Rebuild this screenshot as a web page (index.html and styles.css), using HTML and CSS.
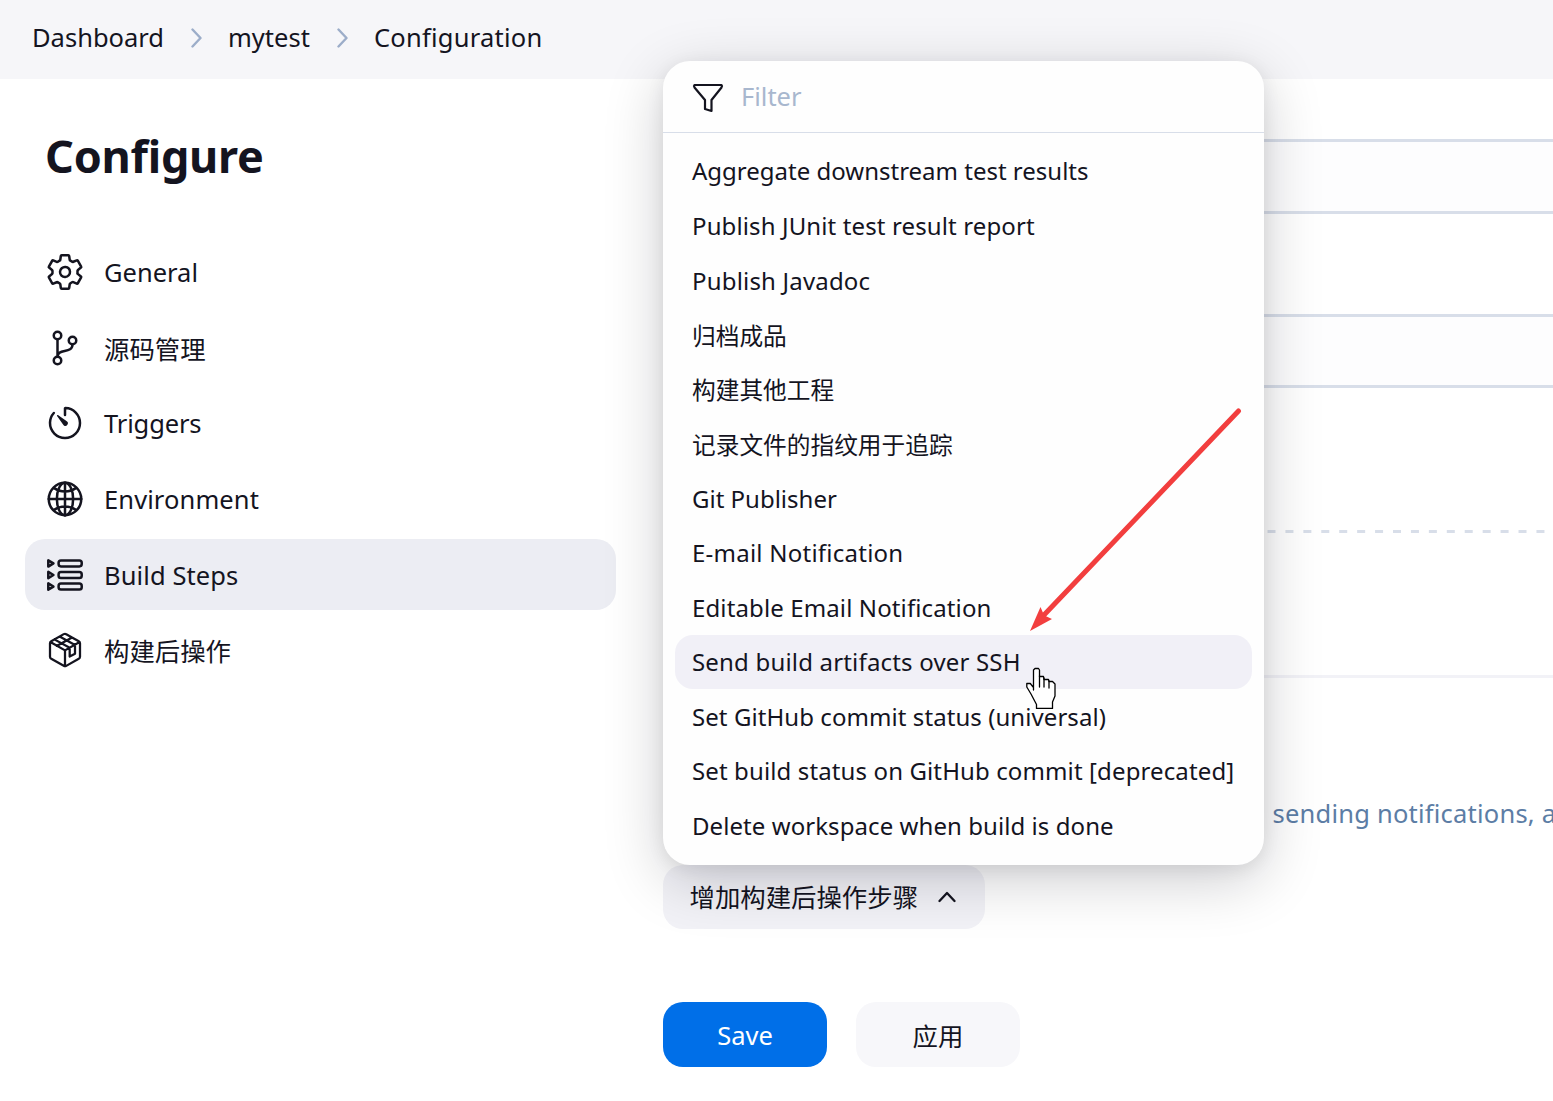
FILE: index.html
```html
<!DOCTYPE html>
<html lang="en">
<head>
<meta charset="utf-8">
<title>mytest Config</title>
<link rel="stylesheet" href="styles.css">
</head>
<body>
<header class="breadcrumbs">
  <span class="crumb">Dashboard</span>
  <svg class="crumb-sep" viewBox="0 0 12 20"><path d="M2.500 1.500l8 8.500l-8 8.500"/></svg>
  <span class="crumb">mytest</span>
  <svg class="crumb-sep" viewBox="0 0 12 20"><path d="M2.500 1.500l8 8.500l-8 8.500"/></svg>
  <span class="crumb crumb-page">Configuration</span>
</header>
<div class="page">
  <aside class="side-panel">
    <h1 class="title">Configure</h1>
    <nav class="tasks">
      <a class="task">
        <svg class="icon" viewBox="0 0 512 512"><path d="M262.290 192.310a64 64 0 1057.400 57.400 64.130 64.130 0 00-57.400-57.400zM416.390 256a154.340 154.340 0 01-1.530 20.790l45.210 35.460a10.810 10.810 0 012.450 13.750l-42.770 74a10.810 10.810 0 01-13.140 4.590l-44.900-18.080a16.110 16.110 0 00-15.170 1.750A164.480 164.480 0 01325 400.800a15.940 15.940 0 00-8.820 12.140l-6.730 47.890a11.080 11.080 0 01-10.680 9.170h-85.540a11.110 11.110 0 01-10.690-8.870l-6.720-47.820a16.070 16.070 0 00-9-12.220 155.300 155.300 0 01-21.460-12.570 16 16 0 00-15.110-1.710l-44.890 18.070a10.810 10.810 0 01-13.140-4.580l-42.770-74a10.800 10.800 0 012.450-13.750l38.210-30a16.050 16.050 0 006-14.080c-.36-4.170-.58-8.330-.58-12.500s.21-8.270.58-12.350a16 16 0 00-6.070-13.940l-38.190-30A10.810 10.810 0 0149.480 186l42.770-74a10.810 10.810 0 0113.140-4.590l44.900 18.080a16.110 16.110 0 0015.170-1.750A164.480 164.480 0 01187 111.200a15.940 15.940 0 008.820-12.140l6.730-47.890A11.080 11.080 0 01213.230 42h85.540a11.110 11.110 0 0110.690 8.870l6.720 47.820a16.070 16.070 0 009 12.220 155.300 155.300 0 0121.460 12.570 16 16 0 0015.110 1.710l44.890-18.070a10.810 10.810 0 0113.140 4.580l42.770 74a10.800 10.800 0 01-2.450 13.750l-38.210 30a16.050 16.050 0 00-6.050 14.080c.33 4.140.55 8.300.55 12.470z"/></svg>
        <span class="task-label">General</span>
      </a>
      <a class="task">
        <svg class="icon" viewBox="0 0 512 512"><circle cx="160" cy="96" r="48"/><circle cx="160" cy="416" r="48"/><circle cx="352" cy="160" r="48"/><path d="M160 368V144M352 208c0 128-192 48-192 160"/></svg>
        <span class="task-label cjk">源码管理</span>
      </a>
      <a class="task">
        <svg class="icon" viewBox="0 0 512 512"><path d="M112.910 128A191.850 191.850 0 0064 254c-1.180 106.350 85.650 193.800 192 194 106.200.2 192-85.830 192-192 0-104.540-83.550-189.610-187.500-192a4.360 4.360 0 00-4.500 4.370V152"/><path class="solid" d="M233.380 278.630l-79-113a8.130 8.130 0 0111.320-11.320l113 79a32.500 32.500 0 01-37.250 53.260 33.210 33.210 0 01-8.070-7.940z"/></svg>
        <span class="task-label t-triggers">Triggers</span>
      </a>
      <a class="task">
        <svg class="icon" viewBox="0 0 512 512"><circle cx="256" cy="256" r="208"/><ellipse cx="256" cy="256" rx="104" ry="208"/><path d="M256 48v416M48 256h416M117 117c38 27 86 43 139 43s101-16 139-43M117 395c38-27 86-43 139-43s101 16 139 43"/></svg>
        <span class="task-label t-wide">Environment</span>
      </a>
      <a class="task task-active">
        <svg class="icon" viewBox="0 0 512 512"><rect x="174" y="70" width="296" height="76" rx="30"/><rect x="174" y="218" width="296" height="76" rx="30"/><rect x="174" y="366" width="296" height="76" rx="30"/><path d="M42 68v80l66-40zM42 216v80l66-40zM42 364v80l66-40z"/></svg>
        <span class="task-label t-wide">Build Steps</span>
      </a>
      <a class="task">
        <svg class="icon box" viewBox="0 0 512 512"><path d="M448 341V171a32 32 0 00-16-28L272 53a32 32 0 00-32 0L80 143a32 32 0 00-16 28v170a32 32 0 0016 28l160 90a32 32 0 0032 0l160-90a32 32 0 0016-28zM69 154l187 107 187-107M256 463V261M187 84l197 107v112l-68 36V226L119 120M150 204L346 96"/></svg>
        <span class="task-label cjk">构建后操作</span>
      </a>
    </nav>
  </aside>
  <main class="content">
    <div class="field"></div>
    <div class="field field-second"></div>
    <svg class="dashes" viewBox="0 0 910 3"><path d="M604.500 1.500H890"/></svg>
    <div class="divider"></div>
    <p class="description">sending notifications, a</p>
    <div class="add-step"><span class="cjk">增加构建后操作步骤</span><svg class="chevron" viewBox="0 0 18 12"><path d="M1.500 10L9 2l7.500 8"/></svg></div>
    <div class="actions">
      <div class="button button-primary">Save</div>
      <div class="button cjk">应用</div>
    </div>
  </main>
</div>
<div class="menu">
  <div class="menu-filter">
    <svg class="funnel" viewBox="0 0 32 30"><path d="M2.500 2h27q1 1 0 2.500L19.500 17v11l-6.500-2V17L2.500 4.500Q1.500 3 2.500 2z"/></svg>
    <span class="filter-text">Filter</span>
  </div>
  <div class="menu-list">
    <div class="item">Aggregate downstream test results</div>
    <div class="item ls-2">Publish JUnit test result report</div>
    <div class="item ls-3 item-low">Publish Javadoc</div>
    <div class="item cjk-item">归档成品</div>
    <div class="item cjk-item">构建其他工程</div>
    <div class="item cjk-item">记录文件的指纹用于追踪</div>
    <div class="item">Git Publisher</div>
    <div class="item ls-4">E-mail Notification</div>
    <div class="item ls-2">Editable Email Notification</div>
    <div class="item ls-3 item-hover">Send build artifacts over SSH</div>
    <div class="item ls-1">Set GitHub commit status (universal)</div>
    <div class="item ls-2">Set build status on GitHub commit [deprecated]</div>
    <div class="item ls-1">Delete workspace when build is done</div>
  </div>
</div>
<svg class="arrow" viewBox="0 0 220 230"><path class="shaft" d="M208.500 7L14 211"/><path class="head" d="M0 227l10.500-24 3 7 2 2 6.500 3z"/></svg>
<svg class="pointer" viewBox="0 0 30 42"><path d="M7.500 23V3L9 1.500h3.500l1 1.500v6.500h4l.5 3h4.500l.5 2h3.500l2.500 2.500v12l-2.500 6v6.500H10.500v-4L5 27 .8 20v-3.500h3.500l3.200 4"/><path d="M13.500 9v11M18 11v9M23 14v7" /></svg>
</body>
</html>
```
FILE: styles.css
```css
* { box-sizing: border-box; }
body {
  margin: 0;
  width: 1553px;
  height: 1101px;
  overflow: hidden;
  position: relative;
  background: #fff;
  color: #14141f;
  font-family: "Noto Sans", "Noto Sans CJK SC", sans-serif;
  font-size: 25.500px;
}
svg { display: block; fill: none; stroke: currentColor; stroke-linecap: round; stroke-linejoin: round; flex: none; }
.breadcrumbs {
  height: 79px;
  padding: 0 0 3px 32px;
  display: flex;
  align-items: center;
  background: #f6f6f9;
  white-space: nowrap;
}
.crumb { padding-bottom: 2px; }
.crumb-page { letter-spacing: .24px; }
.crumb-sep { width: 12px; height: 20px; margin: 0 26px; stroke: #9cadc9; stroke-width: 2.400; }
.page { display: flex; height: 1022px; }
.side-panel { width: 616px; padding: 44px 0 0 25px; flex: none; }
.title { margin: 0 0 47px 20px; font-size: 45px; line-height: 66px; font-weight: 700; letter-spacing: -.25px; }
.tasks { display: flex; flex-direction: column; gap: 4px; }
.task { display: flex; align-items: center; height: 71.700px; padding-left: 20px; border-radius: 20px; }
.task-active { background: #ecedf3; }
.task-label { margin-left: 19px; }
.t-triggers { letter-spacing: -.14px; }
.t-wide { letter-spacing: .1px; }
.icon { width: 40px; height: 40px; stroke-width: 32; }
.icon .solid { fill: currentColor; stroke: none; }
.box { stroke-width: 29; }
.cjk { font-size: 25.400px; }
.content { flex: 1; margin-left: 47px; padding-top: 60px; min-width: 0; }
.field { height: 75px; border: 3px solid #d8dee9; border-right: 0; background: #fdfdfe; }
.field-second { margin-top: 100px; height: 74px; }
.dashes { width: 910px; height: 3px; margin-top: 142px; stroke: #d8dee9; stroke-width: 3; stroke-linecap: butt; stroke-dasharray: 8 9.930; }
.divider { height: 3px; margin-top: 142px; background: #f2f2f7; }
.description { margin: 116px 0 33px; padding-left: 609.500px; line-height: 38px; color: #5c7da5; white-space: nowrap; letter-spacing: .22px; }
.add-step { display: flex; align-items: center; width: 322px; height: 64px; padding-left: 26.500px; border-radius: 20px; background: #f2f2f7; }
.add-step .cjk { padding-bottom: 2px; }
.chevron { width: 18px; height: 12px; margin-left: 19.500px; stroke-width: 2.300; }
.actions { display: flex; gap: 29px; margin-top: 73px; }
.button { width: 164px; height: 65px; border-radius: 20px; display: flex; align-items: center; justify-content: center; background: #f7f7fa; }
.button-primary { background: #006fe8; color: #fff; }
.menu {
  position: absolute;
  left: 663px;
  top: 61px;
  width: 601px;
  height: 804px;
  border-radius: 27px;
  background: #fefefe;
  box-shadow: 0 15px 60px rgba(0, 0, 20, .2), 0 4px 18px rgba(0, 0, 20, .07);
}
.menu-filter { height: 72px; display: flex; align-items: center; padding-left: 29px; border-bottom: 1px solid #d8dee9; color: #a8b7ce; }
.funnel { width: 32px; height: 30px; stroke: #14141f; stroke-width: 2.200; margin: 2px 17px 0 0; }
.filter-text { padding-bottom: 2px; }
.menu-list { padding: 11px 12px; }
.item { height: 54.550px; padding: 0 0 1px 17px; display: flex; align-items: center; border-radius: 18px; font-size: 24px; white-space: nowrap; }
.ls-1 { letter-spacing: .07px; }
.ls-2 { letter-spacing: .12px; }
.ls-3 { letter-spacing: .18px; }
.ls-4 { letter-spacing: .24px; }
.item-low { padding-bottom: 0; }
.cjk-item { font-size: 23.700px; padding-bottom: 0; }
.item-hover { background: #f1f0f7; }
.arrow { position: absolute; left: 1030px; top: 404px; width: 220px; height: 230px; color: #f23e3e; }
.arrow .shaft { stroke-width: 5; }
.arrow .head { fill: currentColor; stroke: none; }
.pointer { position: absolute; left: 1026px; top: 667px; width: 30px; height: 42px; fill: #fff; stroke: #000; stroke-width: 1.300; }
```
